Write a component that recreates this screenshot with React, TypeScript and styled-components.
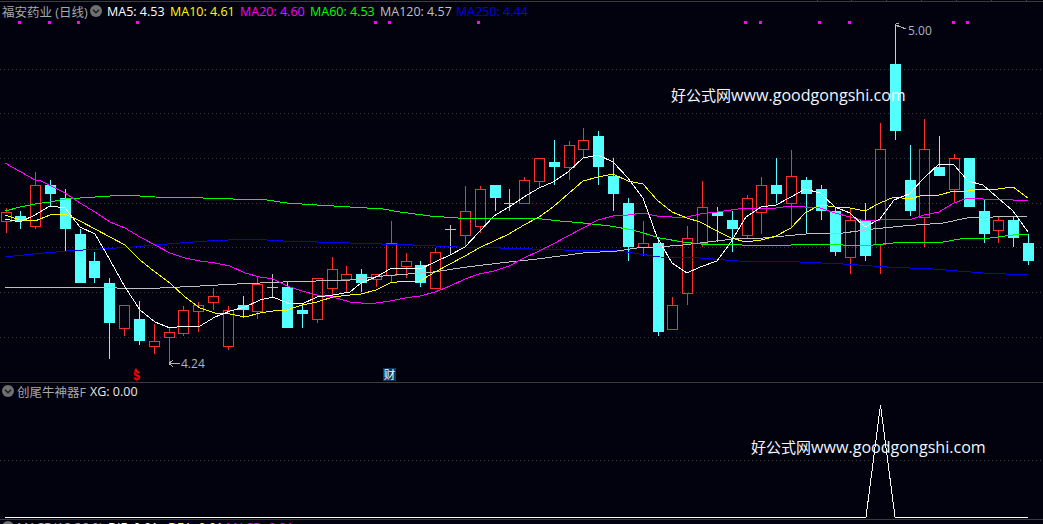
import React from "react";
import styled, { createGlobalStyle } from "styled-components";

const GlobalStyle = createGlobalStyle`
  html, body {
    margin: 0;
    padding: 0;
    background: #02020f;
  }
`;

const Screen = styled.div`
  width: 1043px;
  height: 524px;
  display: flex;
  flex-direction: column;
  overflow: hidden;
  background: #02020f;
  font-family: "Open Sans", "Noto Sans CJK SC", sans-serif;
`;

const Pane = styled.div<{ $height: number }>`
  position: relative;
  flex: none;
  height: ${(p) => p.$height}px;
  border-bottom: 1px solid #3c3c3c;
`;

const Chart = styled.svg`
  display: block;
  width: 1043px;
  height: 100%;
`;

const Legend = styled.div<{ $top: number }>`
  position: absolute;
  top: ${(p) => p.$top}px;
  left: 2px;
  display: flex;
  align-items: center;
  height: 18px;
  font-size: 12.5px;
  white-space: nowrap;
`;

const Item = styled.span<{ $color: string; $width?: number; $gap?: number }>`
  color: ${(p) => p.$color};
  margin-left: ${(p) => p.$gap ?? 0}px;
  ${(p) => (p.$width ? `width: ${p.$width}px;` : "")}
`;

const Watermark = styled.div<{ $x: number; $y: number }>`
  position: absolute;
  left: ${(p) => p.$x}px;
  top: ${(p) => p.$y}px;
  color: #f0f6ff;
  font-size: 16.1px;
  line-height: 20px;
  white-space: nowrap;
`;

const WatermarkHan = styled.span`
  font-size: 15px;
`;

const PriceTag = styled.div<{ $x: number; $y: number }>`
  position: absolute;
  left: ${(p) => p.$x}px;
  top: ${(p) => p.$y}px;
  color: #a9b4c0;
  font-size: 12px;
  line-height: 14px;
`;

const SignalMark = styled.div`
  position: absolute;
  left: 132px;
  top: 368px;
  width: 9px;
  text-align: center;
  color: #ff0000;
  font: bold 12px/11px "Liberation Sans", sans-serif;
  padding-top: 3px;
  &::before {
    content: "";
    position: absolute;
    left: 2px;
    top: 0;
    border-left: 2.5px solid transparent;
    border-right: 2.5px solid transparent;
    border-bottom: 3px solid #ff0000;
  }
`;

const Badge = styled.div`
  position: absolute;
  left: 383px;
  top: 368px;
  width: 13px;
  height: 13px;
  background: #0b3a68;
  color: #fff;
  font-size: 11.5px;
  line-height: 13px;
  text-align: center;
`;

const FoldIcon = styled.svg`
  flex: none;
  width: 12px;
  height: 12px;
`;

type Candle = [number, number, number, number, "r" | "c" | "d"];

// high, low, body top, body bottom, kind
const candles: Candle[] = [
  [208, 233, 212, 221, "r"],
  [211, 229, 216, 221, "c"],
  [172, 229, 185, 226, "r"],
  [180, 207, 185, 194, "c"],
  [189, 251, 198, 229, "c"],
  [229, 283, 234, 283, "c"],
  [252, 283, 261, 278, "c"],
  [278, 359, 283, 323, "c"],
  [305, 336, 305, 328, "r"],
  [301, 345, 319, 341, "c"],
  [324, 354, 341, 346, "r"],
  [328, 363, 332, 337, "r"],
  [306, 336, 310, 333, "r"],
  [302, 332, 305, 311, "r"],
  [288, 310, 296, 302, "r"],
  [306, 350, 310, 346, "r"],
  [296, 318, 305, 310, "c"],
  [276, 319, 284, 311, "r"],
  [274, 297, 287, 287, "d"],
  [282, 328, 287, 328, "c"],
  [305, 328, 310, 314, "c"],
  [278, 323, 278, 319, "r"],
  [257, 297, 269, 288, "r"],
  [266, 292, 274, 279, "r"],
  [269, 292, 274, 283, "c"],
  [274, 287, 274, 279, "r"],
  [221, 283, 243, 275, "r"],
  [253, 278, 261, 266, "r"],
  [261, 287, 265, 283, "c"],
  [248, 288, 252, 288, "r"],
  [225, 255, 229, 229, "d"],
  [186, 247, 211, 235, "r"],
  [186, 233, 189, 226, "r"],
  [185, 211, 185, 198, "c"],
  [189, 211, 203, 203, "d"],
  [177, 203, 180, 203, "r"],
  [158, 188, 158, 181, "r"],
  [140, 185, 162, 167, "c"],
  [141, 180, 145, 167, "r"],
  [128, 158, 140, 149, "r"],
  [131, 185, 136, 167, "c"],
  [158, 211, 176, 194, "c"],
  [198, 261, 203, 247, "c"],
  [221, 256, 243, 247, "r"],
  [238, 336, 243, 332, "c"],
  [297, 329, 305, 329, "r"],
  [226, 305, 238, 293, "r"],
  [181, 247, 207, 243, "r"],
  [207, 242, 212, 216, "c"],
  [211, 252, 220, 229, "c"],
  [195, 238, 198, 235, "r"],
  [177, 234, 185, 212, "r"],
  [158, 203, 185, 194, "c"],
  [150, 228, 176, 203, "r"],
  [177, 234, 180, 194, "c"],
  [185, 220, 189, 211, "c"],
  [207, 256, 211, 252, "c"],
  [208, 274, 220, 257, "r"],
  [203, 261, 220, 256, "c"],
  [123, 274, 149, 244, "r"],
  [24, 140, 64, 131, "c"],
  [145, 216, 180, 211, "c"],
  [119, 247, 149, 217, "r"],
  [136, 176, 167, 176, "c"],
  [154, 203, 158, 189, "r"],
  [158, 207, 158, 207, "c"],
  [199, 243, 211, 234, "c"],
  [216, 243, 220, 230, "r"],
  [216, 247, 220, 238, "c"],
  [234, 265, 243, 261, "c"],
];

const ma5 =
  "5,219 20,222 35,215 50,206 65,208 80,227 95,234 110,260 125,287 140,310 155,322 170,328 185,326 200,326 215,317 230,311 245,307 260,300 273,297 287,303 302,304 317,297 333,295 350,292 361,283 376,277 390,269 405,268 420,269 435,262 450,255 465,247 479,232 494,216 509,207 524,197 539,188 553,182 568,172 583,158 598,155 613,162 628,178 643,198 657,237 672,263 687,273 700,267 717,261 731,242 746,217 761,207 776,205 791,197 805,189 820,193 835,207 850,213 865,227 880,219 894,200 909,194 924,178 939,164 954,165 968,181 983,185 998,198 1013,211 1028,232";
const ma10 =
  "5,215 20,220 35,221 50,215 65,214 80,221 95,229 110,237 125,245 140,260 155,272 170,283 185,297 200,308 215,313 230,314 245,317 260,313 273,311 287,310 302,305 317,302 333,297 350,295 361,294 376,290 390,283 405,281 420,281 435,272 450,264 465,256 479,248 494,241 509,234 524,225 539,217 553,207 568,194 583,181 598,177 613,174 628,181 643,184 657,200 672,212 687,218 700,222 717,231 731,238 746,242 761,240 776,236 791,228 805,213 820,205 835,207 850,208 865,211 880,203 894,197 909,199 924,195 939,195 954,191 968,191 983,189 998,189 1013,187 1028,198";
const ma20 =
  "5,163 35,180 39,180 65,193 80,203 95,212 110,222 125,228 140,237 155,245 170,253 185,258 200,261 215,263 230,266 245,273 260,277 273,279 287,286 302,291 317,295 333,297 350,302 361,303 376,303 390,301 405,298 420,296 435,292 450,286 465,279 479,274 494,271 509,266 524,258 539,251 553,244 568,236 583,228 598,220 613,216 628,215 643,213 657,216 672,217 687,217 700,214 717,212 731,210 746,208 761,208 776,208 791,206 805,207 820,208 835,213 850,217 865,221 880,220 894,219 909,220 924,215 939,212 954,203 968,198 983,199 998,199 1013,200 1028,201";
const ma60 =
  "5,211 20,207 35,204 50,202 65,199 80,198 95,197 110,196 125,195 140,196 155,197 203,198 233,199 267,200 287,203 317,205 350,207 383,209 400,212 430,216 458,218 533,218 560,221 583,223 610,226 633,230 660,238 683,242 700,244 783,246 800,244 828,244 843,245 873,245 903,242 943,242 960,239 990,238 1013,235 1028,234";
const ma120 =
  "5,288 28,287 100,287 133,289 160,288 200,286 237,284 283,282 350,280 383,276 433,272 467,267 500,263 537,259 583,253 617,251 637,248 657,247 683,245 700,243 733,239 763,238 817,233 843,233 873,229 903,226 943,223 967,218 993,217 1028,216";
const ma250 =
  "5,257 33,254 67,251 100,249 133,247 167,244 207,241 250,239 283,241 350,243 413,245 458,247 500,248 563,250 617,251 633,253 660,257 700,258 738,261 800,262 843,264 887,267 933,269 983,273 1028,275";

const maLines: [string, string][] = [
  [ma120, "#c0c0c0"],
  [ma250, "#0000f0"],
  [ma60, "#00ff00"],
  [ma20, "#ff00ff"],
  [ma10, "#ffff00"],
  [ma5, "#ffffff"],
];

const gridRows = [69, 113, 158, 203, 247, 292, 337];
const signalDots = [19, 49, 78, 137, 375, 389, 478, 745, 760, 819, 849, 953, 967];
const topTicks = [817, 851, 886, 921, 956, 991, 1026];

const UP = "#ff2e2e";
const DOWN = "#54ffff";

const candleX = (i: number) => Math.round(5.5 + i * 14.82);

const CandleMark: React.FC<{ c: Candle; x: number }> = ({ c, x }) => {
  const [high, low, top, bottom, kind] = c;
  const px = x + 0.5;
  if (kind === "d") {
    return (
      <g stroke="#c0c0c0">
        <line x1={px} x2={px} y1={high} y2={low} />
        <line x1={x - 5} x2={x + 6} y1={top + 0.5} y2={top + 0.5} />
      </g>
    );
  }
  if (kind === "c") {
    return (
      <g>
        <line x1={px} x2={px} y1={high} y2={low} stroke={DOWN} />
        <rect x={x - 5} y={top} width={11} height={bottom - top} fill={DOWN} />
      </g>
    );
  }
  return (
    <g stroke={UP} fill="none">
      <line x1={px} x2={px} y1={high} y2={top} />
      <line x1={px} x2={px} y1={bottom} y2={low} />
      <rect x={x - 4.5} y={top + 0.5} width={10} height={bottom - top} />
    </g>
  );
};

const Fold: React.FC = () => (
  <FoldIcon viewBox="0 0 12 12">
    <circle cx="6" cy="6" r="6" fill="#707070" />
    <path d="M3 4.8 L6 7.8 L9 4.8" fill="none" stroke="#1c1c1c" strokeWidth="1.4" />
  </FoldIcon>
);

const App: React.FC = () => {
  return (
    <Screen>
      <GlobalStyle />
      <Pane $height={382}>
        <Chart viewBox="0 0 1043 382" shapeRendering="crispEdges">
          <line x1="0" x2="1043" y1="1.5" y2="1.5" stroke="#3c3c3c" />
          {topTicks.map((x) => (
            <line key={x} x1={x + 0.5} x2={x + 0.5} y1="0" y2="2" stroke="#3c3c3c" />
          ))}
          {gridRows.map((y) => (
            <line
              key={y}
              x1="0"
              x2="1043"
              y1={y + 0.5}
              y2={y + 0.5}
              stroke="#3a3a3a"
              strokeDasharray="1 3"
            />
          ))}
          {signalDots.map((x) => (
            <rect key={x} x={x - 1} y={21} width={3} height={3} fill="#ff00ff" />
          ))}
          {candles.map((c, i) => (
            <CandleMark key={i} c={c} x={candleX(i)} />
          ))}
          {maLines.map(([points, color]) => (
            <polyline key={color} points={points} fill="none" stroke={color} />
          ))}
          <path d="M895 24.5 L906 29 M895 24.5 L899 23 M895 24.5 L899 27" fill="none" stroke="#b0b0b0" />
          <path d="M169 363.5 L180 363.5 M169 363.5 L173 360 M169 363.5 L173 367" fill="none" stroke="#b0b0b0" />
        </Chart>
        <Legend $top={2}>
          <Item $color="#a8a8a8" $width={88}>福安药业 (日线)</Item>
          <Fold />
          <Item $color="#ffffff" $width={63} $gap={5}>MA5: 4.53</Item>
          <Item $color="#ffff00" $width={70}>MA10: 4.61</Item>
          <Item $color="#ff00ff" $width={70}>MA20: 4.60</Item>
          <Item $color="#00ff00" $width={70}>MA60: 4.53</Item>
          <Item $color="#c0c0c0" $width={76}>MA120: 4.57</Item>
          <Item $color="#0000f0">MA250: 4.44</Item>
        </Legend>
        <Watermark $x={671} $y={85}>
          <WatermarkHan>好公式网</WatermarkHan>www.goodgongshi.com
        </Watermark>
        <PriceTag $x={908} $y={24}>5.00</PriceTag>
        <PriceTag $x={181} $y={357}>4.24</PriceTag>
        <SignalMark>$</SignalMark>
        <Badge>财</Badge>
      </Pane>
      <Pane $height={136}>
        <Chart viewBox="0 383 1043 136" shapeRendering="crispEdges">
          <line x1="0" x2="1043" y1="460.5" y2="460.5" stroke="#3a3a3a" strokeDasharray="1 3" />
          <polyline points="5,517 866,517 880.5,405 895,517 1028,517" fill="none" stroke="#ffffff" />
        </Chart>
        <Legend $top={-1}>
          <Fold />
          <Item $color="#a8a8a8" $width={73} $gap={3}>创尾牛神器F</Item>
          <Item $color="#e8e8e8">XG: 0.00</Item>
        </Legend>
        <Watermark $x={751} $y={54}>
          <WatermarkHan>好公式网</WatermarkHan>www.goodgongshi.com
        </Watermark>
      </Pane>
      <Pane $height={5}>
        <Legend $top={-2}>
          <Fold />
          <Item $color="#a8a8a8" $width={91} $gap={3}>MACD(12,26,9)</Item>
          <Item $color="#ffffff" $width={60}>DIF: 0.01</Item>
          <Item $color="#ffff00" $width={58}>DEA: 0.01</Item>
          <Item $color="#ff00ff">MACD: 0.01</Item>
        </Legend>
      </Pane>
    </Screen>
  );
};

export default App;
